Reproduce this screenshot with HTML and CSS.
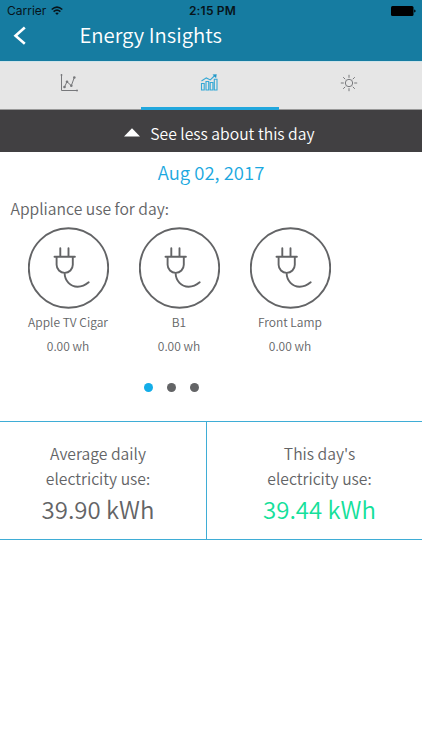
FILE: index.html
```html
<!DOCTYPE html>
<html lang="en">
<head>
<meta charset="utf-8">
<title>Energy Insights</title>
<link rel="stylesheet" href="styles.css">
</head>
<body>
<header class="header">
  <div class="status">
    <div class="carrier"><span>Carrier</span>
      <svg width="12" height="10" viewBox="0 0 12 10" fill="none" stroke="#07141a" stroke-width="1.6"><path d="M.7 3.5Q6-1.1 11.3 3.5M2.6 5.6Q6 2.7 9.4 5.6"/><path d="M4.2 7.1Q6 5.7 7.8 7.1L6 9Z" fill="#07141a" stroke="none"/></svg>
    </div>
    <div class="time">2:15 PM</div>
    <svg class="battery" width="25" height="10" viewBox="0 0 25 10"><rect width="22.5" height="10" rx="1.5"/><path d="M23.2 3.4q1.4.2 1.4 1.6t-1.4 1.6z"/></svg>
  </div>
  <div class="nav">
    <svg width="14" height="20" viewBox="0 0 14 20" fill="none" stroke="#fff" stroke-width="2.6"><path d="M11.8 1.5 2.5 9.7l9.3 8"/></svg>
    <h1>Energy Insights</h1>
  </div>
</header>
<nav class="tabs">
  <div class="tab">
    <svg width="18" height="18" viewBox="0 0 18 18" fill="none" stroke="#77787b" stroke-width="1"><path d="M1.5.5V16.5H17.5M4.5 13 7 7.7l4.3 4L14.3 3.5"/><g fill="#77787b" stroke="none"><circle cx="4.5" cy="13" r="1.3"/><circle cx="7" cy="7.7" r="1.3"/><circle cx="11.3" cy="11.7" r="1.3"/><circle cx="14.3" cy="3.5" r="1.3"/><circle cx="1.5" cy="1" r=".9"/><circle cx="17" cy="16.5" r=".9"/></g></svg>
  </div>
  <div class="tab active">
    <svg width="18" height="18" viewBox="0 0 18 18" fill="none" stroke="#35a8d5" stroke-width="1.1"><path d="M1.5 9.5h2.7v6.5H1.5zM6 7.5h2.7v8.5H6zM10.2 8.5h2.7v7.5h-2.7zM14.3 5.3H17v10.7h-2.7z"/><path d="M1.5 7 6.3 3.9l4 2 4.5-4.4"/><path d="m12.5.6 4.2-.4-.6 4z" fill="#2297c7" stroke="none"/></svg>
  </div>
  <div class="tab">
    <svg width="18" height="18" viewBox="0 0 18 18" fill="none" stroke="#77787b" stroke-width="1"><circle cx="9" cy="9" r="3.7"/><path d="M9 .8v3M9 14.2v3M.8 9h3M14.2 9h3M3.2 3.2l2 2M12.8 12.8l2 2M3.2 14.8l2-2M12.8 5.2l2-2"/></svg>
  </div>
</nav>
<div class="toggle">
  <svg width="16" height="9" viewBox="0 0 16 9"><path d="M0 8.5 8 .2l8 8.3z" fill="#fff"/></svg>
  <span>See less about this day</span>
</div>
<main>
  <h2 class="date">Aug 02, 2017</h2>
  <h3 class="subtitle">Appliance use for day:</h3>
  <svg class="symbols"><symbol id="plug" viewBox="0 0 81 82"><g fill="none" stroke="#636466" stroke-width="1.9"><circle cx="40.5" cy="41" r="39.7"/><path d="M32.3 21.3v8.5M40.5 21.3v8.5M26.5 29.8h20.4M28.6 29.8v8a8.1 8.1 0 0 0 16.2 0v-8M36.6 46c.2 8 5.8 13.7 13 13.7 4.5 0 7.8-1.6 11.1-4.4" stroke-linecap="round"/></g></symbol></svg>
  <section class="appliances">
    <div class="appliance"><svg width="81" height="82"><use href="#plug"/></svg><p>Apple TV Cigar</p><p>0.00 wh</p></div>
    <div class="appliance"><svg width="81" height="82"><use href="#plug"/></svg><p>B1</p><p>0.00 wh</p></div>
    <div class="appliance"><svg width="81" height="82"><use href="#plug"/></svg><p>Front Lamp</p><p>0.00 wh</p></div>
  </section>
  <div class="dots"><i class="dot current"></i><i class="dot"></i><i class="dot"></i></div>
  <section class="stats">
    <div class="stat average"><p>Average daily<br>electricity use:</p><strong>39.90 kWh</strong></div>
    <div class="stat today"><p>This day's<br>electricity use:</p><strong>39.44 kWh</strong></div>
  </section>
</main>
</body>
</html>
```
FILE: styles.css
```css
* { box-sizing: border-box; }
body { margin: 0; background: #fff; color: #636466; font-family: "Noto Sans CJK SC", sans-serif; font-weight: 350; }
h1, h2, h3, p { margin: 0; font-weight: inherit; }
svg { display: block; flex: none; }
.header { height: 61px; background: #167ca1; }
.status { display: grid; grid-template-columns: 1fr auto 1fr; height: 22px; align-items: center; padding: 0 6px 0 7px; color: #07141a; font: 400 12px/22px Inter, sans-serif; }
.carrier { display: flex; align-items: center; gap: 5px; }
.time { padding-left: 2px; font-weight: 600; letter-spacing: .2px; }
.battery { justify-self: end; fill: #000; }
.nav { display: flex; align-items: center; height: 27px; padding-left: 13px; color: #fff; }
.nav h1 { margin: -2px 0 0 52.4px; font-size: 20.3px; line-height: 27px; }
.tabs { display: grid; grid-template-columns: 141px 138px 143px; height: 49px; background: #e6e6e6; border-top: 1px solid #cfe4ea; border-bottom: 1px solid #999; }
.tab { display: flex; justify-content: center; padding-top: 12px; }
.tab:first-child { padding-right: 3px; }
.tab:nth-child(2) { padding-right: 2px; }
.tab:last-child { padding-right: 3px; }
.active { margin-bottom: -1px; border-bottom: 3px solid #22a7dd; }
.toggle { display: flex; align-items: center; height: 42px; padding: 5px 0 0 123.5px; background: #414042; color: #fff; font-size: 15.7px; line-height: 24px; }
.toggle svg { margin-top: -3px; }
.toggle span { margin: 1px 0 0 10.8px; }
.date { height: 42px; color: #1ba8e0; text-align: center; font-size: 18.5px; line-height: 40px; }
.subtitle { height: 33px; padding-left: 10.5px; font-size: 15.7px; line-height: 30px; }
.symbols { width: 0; height: 0; }
.appliances { display: grid; grid-template-columns: repeat(3, 111px); padding-left: 13px; }
.appliance { display: flex; flex-direction: column; align-items: center; font-size: 12px; line-height: 24px; }
.appliance p { position: relative; top: 1px; left: -.5px; }
.dots { display: flex; gap: 14px; height: 64px; padding: 26px 0 0 144px; }
.dot { width: 9px; height: 9px; border-radius: 50%; background: #636466; }
.current { background: #13ade8; }
.stats { display: grid; grid-template-columns: 207px 1fr; height: 119px; border: solid #3fadd6; border-width: 1px 0; }
.stat { padding-top: 19px; text-align: center; font-size: 15.7px; line-height: 25px; }
.average { padding-right: 10px; border-right: 1px solid #3fadd6; }
.today { padding-left: 10px; }
.stat strong { display: block; font-weight: inherit; font-size: 24px; line-height: 35px; }
.today strong { color: #14e09a; }
```
